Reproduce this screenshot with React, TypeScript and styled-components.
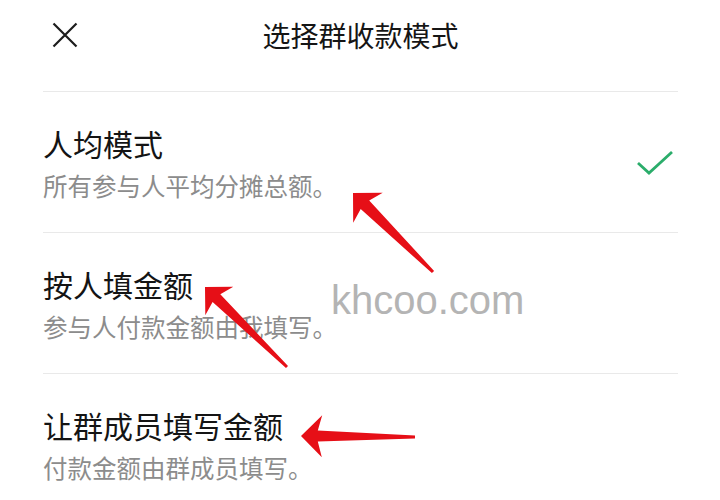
import * as React from "react";
import styled, { createGlobalStyle } from "styled-components";

interface ModeOption {
    title: string;
    desc: string;
    selected?: boolean;
}

interface Point {
    x: number;
    y: number;
}

interface ArrowSpec {
    tip: Point;
    tail: Point;
    headLen: number;
    headHalf: number;
    shaftHead: number;
    shaftTail: number;
}

const GlobalStyle = createGlobalStyle`
    html, body {
        margin: 0;
        padding: 0;
        background: #ffffff;
    }
    body {
        font-family: "Noto Sans CJK SC", "Noto Sans", sans-serif;
    }
`;

const Page = styled.div`
    position: relative;
    width: 720px;
    height: 500px;
    overflow: hidden;
    background: #ffffff;
`;

const Header = styled.header`
    display: grid;
    grid-template-columns: 1fr auto 1fr;
    align-items: center;
    box-sizing: border-box;
    height: 92px;
    margin: 0 42px 0 43px;
    padding-bottom: 22px;
    border-bottom: 1px solid #e9e9e9;
`;

const CloseButton = styled.button`
    justify-self: start;
    display: flex;
    width: 26px;
    height: 26px;
    margin-left: 9px;
    padding: 0;
    border: none;
    background: none;
    color: #1c1c1c;
`;

const Title = styled.h1`
    margin: 0;
    font-size: 28px;
    font-weight: 400;
    line-height: 40px;
    color: #151515;
`;

const List = styled.ul`
    list-style: none;
    margin: 0 42px 0 43px;
    padding: 0;
`;

const Row = styled.li`
    display: flex;
    align-items: center;
    justify-content: space-between;
    padding: 33px 0 31px;
    border-bottom: 1px solid #e9e9e9;
`;

const RowText = styled.div`
    display: flex;
    flex-direction: column;
`;

const RowTitle = styled.div`
    font-size: 30px;
    line-height: 36px;
    color: #141414;
`;

const RowDesc = styled.div`
    margin-top: 10px;
    font-size: 24.5px;
    line-height: 30px;
    color: #8c8c8c;
`;

const Check = styled.svg`
    margin-right: 4px;
    flex-shrink: 0;
`;

const Overlay = styled.svg`
    position: absolute;
    left: 0;
    top: 0;
    pointer-events: none;
`;

const Watermark = styled.div`
    position: absolute;
    left: 331px;
    top: 280px;
    font-family: "Liberation Sans", Arial, sans-serif;
    font-size: 40px;
    line-height: 1;
    color: #b4b4b4;
    pointer-events: none;
`;

const options: ModeOption[] = [
    { title: "人均模式", desc: "所有参与人平均分摊总额。", selected: true },
    { title: "按人填金额", desc: "参与人付款金额由我填写。" },
    { title: "让群成员填写金额", desc: "付款金额由群成员填写。" },
];

const arrows: ArrowSpec[] = [
    { tip: { x: 353, y: 193 }, tail: { x: 433, y: 272 }, headLen: 21, headHalf: 21, shaftHead: 12, shaftTail: 3 },
    { tip: { x: 205, y: 287 }, tail: { x: 287, y: 367 }, headLen: 20, headHalf: 20, shaftHead: 11, shaftTail: 3 },
    { tip: { x: 301, y: 436 }, tail: { x: 415, y: 437 }, headLen: 21, headHalf: 21, shaftHead: 11, shaftTail: 3 },
];

// build the polygon of a tapered annotation arrow
const arrowPoints = (a: ArrowSpec) => {
    const dx = a.tail.x - a.tip.x;
    const dy = a.tail.y - a.tip.y;
    const len = Math.hypot(dx, dy);
    const ux = dx / len;
    const uy = dy / len;
    const nx = -uy;
    const ny = ux;
    const base = { x: a.tip.x + ux * a.headLen, y: a.tip.y + uy * a.headLen };
    const notch = { x: a.tip.x + ux * a.headLen * 0.8, y: a.tip.y + uy * a.headLen * 0.8 };
    const pts: Point[] = [
        a.tip,
        { x: base.x + nx * a.headHalf, y: base.y + ny * a.headHalf },
        { x: notch.x + nx * a.shaftHead / 2, y: notch.y + ny * a.shaftHead / 2 },
        { x: a.tail.x + nx * a.shaftTail / 2, y: a.tail.y + ny * a.shaftTail / 2 },
        { x: a.tail.x - nx * a.shaftTail / 2, y: a.tail.y - ny * a.shaftTail / 2 },
        { x: notch.x - nx * a.shaftHead / 2, y: notch.y - ny * a.shaftHead / 2 },
        { x: base.x - nx * a.headHalf, y: base.y - ny * a.headHalf },
    ];
    return pts.map((p) => `${p.x.toFixed(1)},${p.y.toFixed(1)}`).join(" ");
};

const CloseIcon = () => (
    <svg width="26" height="26" viewBox="0 0 26 26">
        <path d="M1.5 1.5 L24.5 24.5 M24.5 1.5 L1.5 24.5" stroke="currentColor" strokeWidth="2.2" fill="none" />
    </svg>
);

const CheckIcon = () => (
    <Check width="38" height="26" viewBox="0 0 38 26">
        <polyline points="2,13 13,23 36,2" stroke="#2bad6b" strokeWidth="2.8" fill="none" strokeLinejoin="miter" />
    </Check>
);

export default function App() {
    return (
        <Page>
            <GlobalStyle />
            <Header>
                <CloseButton aria-label="关闭">
                    <CloseIcon />
                </CloseButton>
                <Title>选择群收款模式</Title>
                <span />
            </Header>
            <List>
                {options.map((o) => (
                    <Row key={o.title}>
                        <RowText>
                            <RowTitle>{o.title}</RowTitle>
                            <RowDesc>{o.desc}</RowDesc>
                        </RowText>
                        {o.selected && <CheckIcon />}
                    </Row>
                ))}
            </List>
            <Watermark>khcoo.com</Watermark>
            <Overlay width="720" height="500" viewBox="0 0 720 500">
                {arrows.map((a, i) => (
                    <polygon key={i} points={arrowPoints(a)} fill="#e60f17" />
                ))}
            </Overlay>
        </Page>
    );
}
